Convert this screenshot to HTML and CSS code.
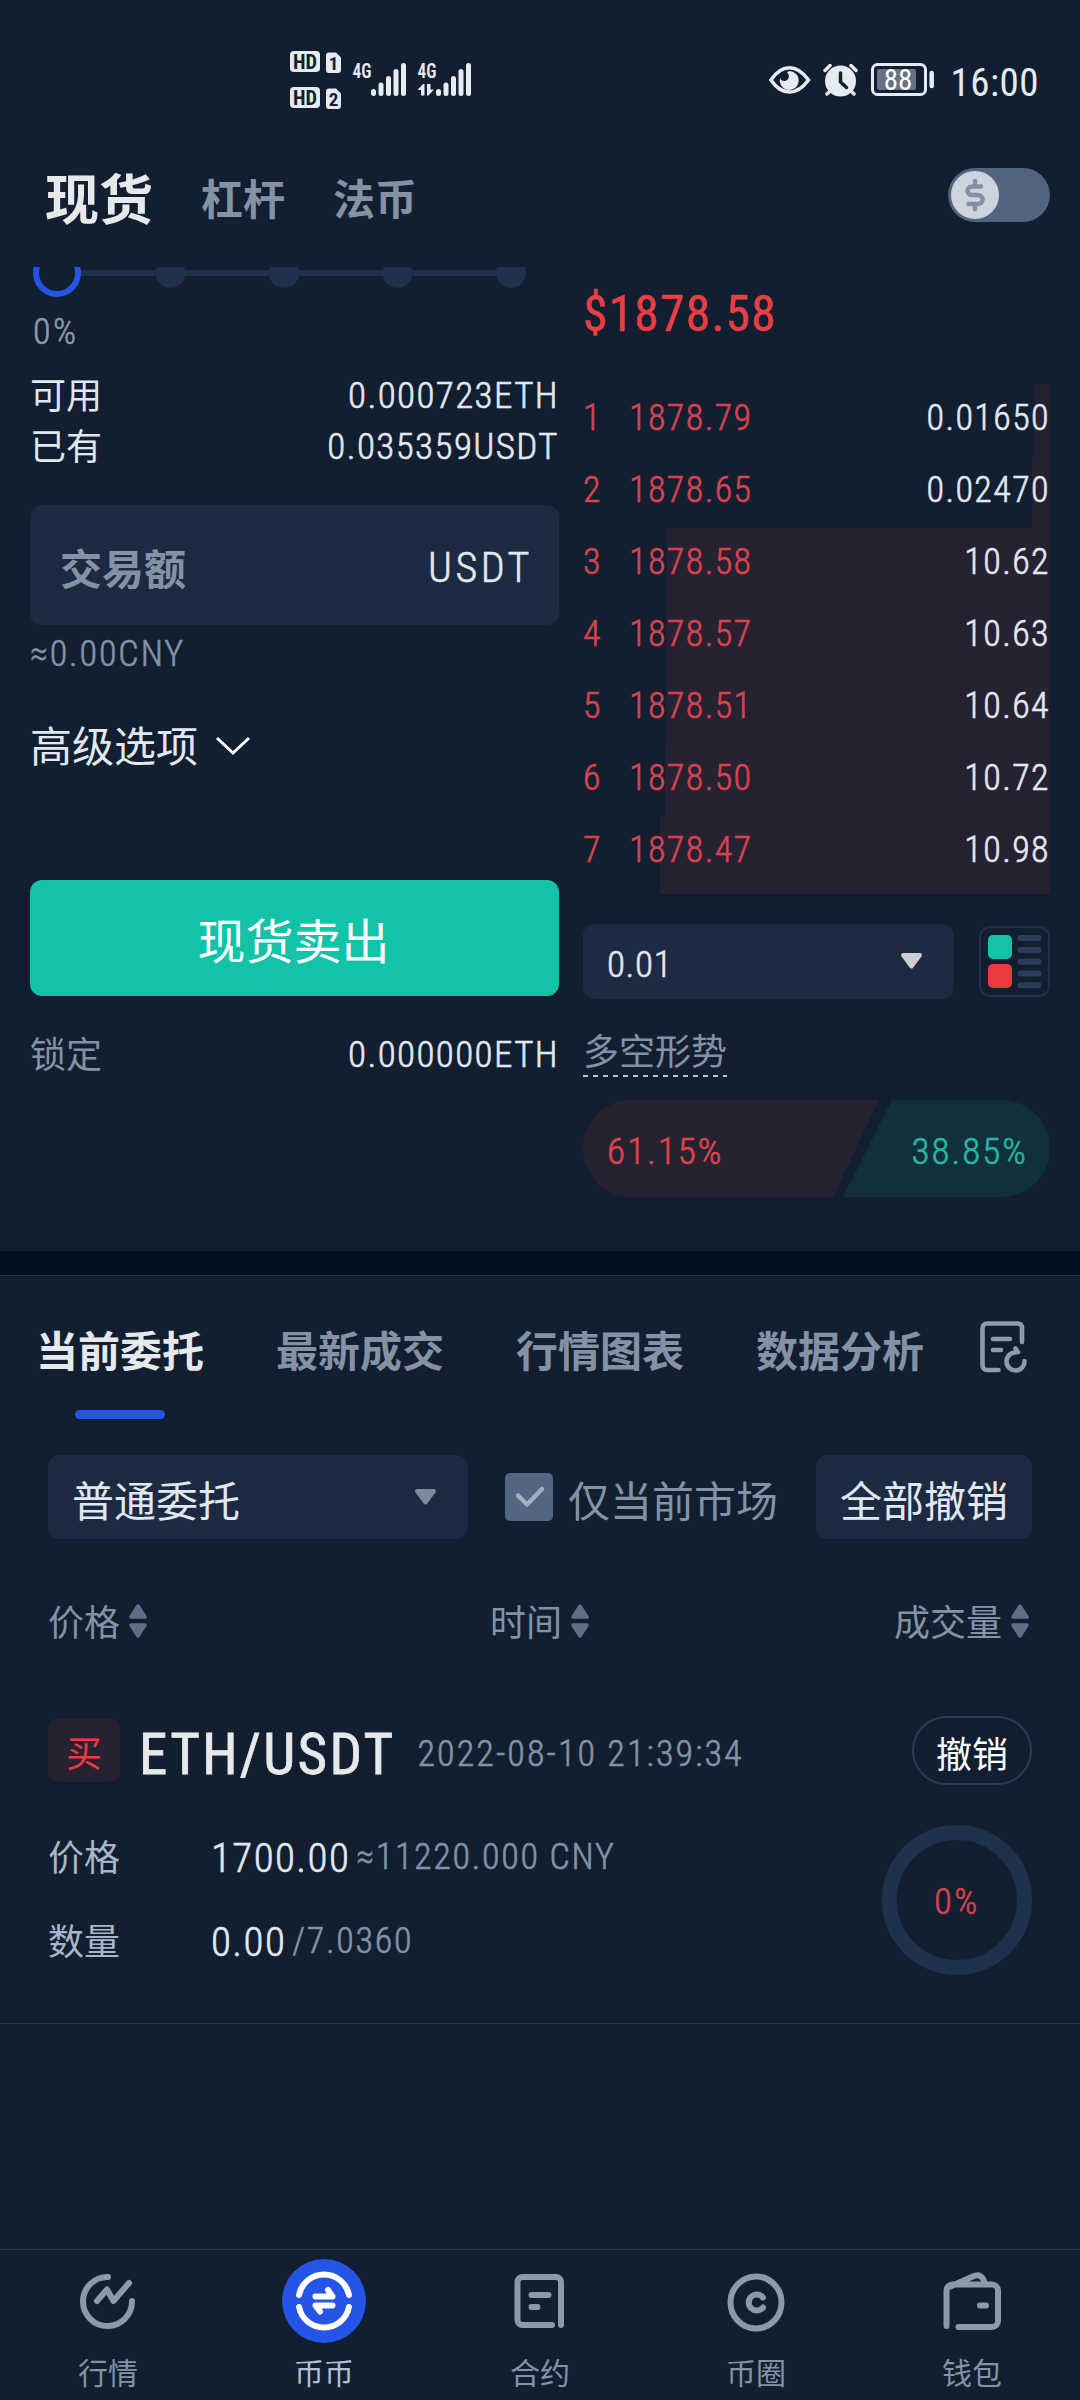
FILE: index.html
```
<!DOCTYPE html>
<html lang="zh-CN">
<head>
<meta charset="utf-8">
<title>现货交易</title>
<link rel="stylesheet" href="styles.css">
</head>
<body>
<div class="screen">
  <header class="status">
    <svg class="status-left" width="184" height="62" viewBox="288 49 184 62" fill="#e6ebf2">
      <rect x="290" y="51" width="30" height="21" rx="4"/>
      <text class="hd" x="305" y="69" textLength="24" lengthAdjust="spacingAndGlyphs">HD</text>
      <path d="M329 52.500h7l5 5V70a3 3 0 0 1-3 3h-9a3 3 0 0 1-3-3V55.500a3 3 0 0 1 3-3z"/>
      <text class="hd sim" x="333.500" y="69.500">1</text>
      <rect x="290" y="87" width="30" height="21" rx="4"/>
      <text class="hd" x="305" y="105" textLength="24" lengthAdjust="spacingAndGlyphs">HD</text>
      <path d="M329 88.500h7l5 5V106a3 3 0 0 1-3 3h-9a3 3 0 0 1-3-3V91.500a3 3 0 0 1 3-3z"/>
      <text class="hd sim" x="333.500" y="105.500">2</text>
      <text class="net" x="352.500" y="78" textLength="19" lengthAdjust="spacingAndGlyphs">4G</text>
      <g id="bars" stroke="#e6ebf2" stroke-width="5" stroke-linecap="round">
        <path d="M373.500 91.500v2M381 85v8.500M388.500 78.500v15M396 71.500v22M403.500 65.500v28"/>
      </g>
      <text class="net" x="417.500" y="78" textLength="19" lengthAdjust="spacingAndGlyphs">4G</text>
      <use href="#bars" x="65"/>
      <path d="M417.500 90l5.500-6h1.500v11.500H421V90zM427 84h3.500v5.500h3.500l-5.500 6H427z"/>
    </svg>
    <div class="status-right">
      <svg width="42" height="34" viewBox="771 63 42 34">
        <path d="M773 80c5-7.500 11-12.200 18.500-12.200S805 72.500 810.500 80c-5.500 7.500-11.500 12-19 12S778 87.500 773 80z" fill="none" stroke="#e6ebf2" stroke-width="3.600"/>
        <path d="M791 71a9.500 9.500 0 1 1-9 7a4.500 4.500 0 0 0 8.500 0a5 5 0 0 0-1.500-5.500z" fill="#e6ebf2"/>
      </svg>
      <svg width="36" height="34" viewBox="824 63 36 34">
        <circle cx="841.500" cy="81" r="15.500" fill="#e6ebf2"/>
        <path d="M826 70.500l5-5M857 70.500l-5-5M831 91l-3 3M852 91l3 3" stroke="#e6ebf2" stroke-width="3.500" stroke-linecap="round"/>
        <path d="M841.500 73v9l6 5.500" fill="none" stroke="#121f30" stroke-width="3.500" stroke-linecap="round" stroke-linejoin="round"/>
      </svg>
      <svg width="64" height="34" viewBox="872 63 64 34">
        <rect x="873.500" y="64.500" width="53" height="30" rx="5" fill="none" stroke="#e6ebf2" stroke-width="3"/>
        <rect x="878" y="69" width="39" height="21" rx="2" fill="#677283"/>
        <path d="M932.700 73v13" stroke="#e6ebf2" stroke-width="4.500" stroke-linecap="round"/>
        <text class="battery" x="899" y="89.500">88</text>
      </svg>
      <time class="clock">16:00</time>
    </div>
  </header>

  <nav class="markets">
    <a class="market active">现货</a>
    <a class="market">杠杆</a>
    <a class="market">法币</a>
    <span class="toggle"><svg width="48" height="48" viewBox="0 0 48 48"><circle cx="24" cy="24" r="24" fill="#cdd4de"/><path d="M30 15.500H21.500c-3 0-5 1.600-5 4.300s2 4.200 5 4.200h5c3 0 5 1.700 5 4.500s-2 4.500-5 4.500H17.500M24 10v5M24 33.500v5" fill="none" stroke="#8390a3" stroke-width="4.500" stroke-linecap="round"/></svg></span>
  </nav>

  <main class="trade">
    <section class="form">
      <svg class="slider" width="529" height="30" viewBox="30 267 529 30">
        <path d="M80 273h430" stroke="#20314c" stroke-width="6"/>
        <g fill="#20314c"><circle cx="170.500" cy="273" r="15"/><circle cx="284" cy="273" r="15"/><circle cx="397.500" cy="273" r="15"/><circle cx="511" cy="273" r="15"/></g>
        <circle cx="57" cy="273" r="21" fill="#121f30" stroke="#2455e6" stroke-width="6"/>
      </svg>
      <div class="percent num">0%</div>
      <div class="balances">
        <div class="balance"><span>可用</span><span class="num">0.000723ETH</span></div>
        <div class="balance"><span>已有</span><span class="num">0.035359USDT</span></div>
      </div>
      <div class="amount"><span class="placeholder">交易额</span><span class="unit num">USDT</span></div>
      <div class="approx num">≈0.00CNY</div>
      <div class="advanced"><span>高级选项</span>
        <svg width="36" height="22" viewBox="0 0 36 22"><path d="M2 3l16 15L34 3" fill="none" stroke="#fff" stroke-width="3"/></svg>
      </div>
      <button class="sell">现货卖出</button>
      <div class="balance locked"><span class="muted">锁定</span><span class="num">0.000000ETH</span></div>
    </section>

    <section class="book">
      <div class="last">$1878.58</div>
      <div class="asks num">
        <div class="ask" style="--depth:15px"><i>1</i><b>1878.79</b><span>0.01650</span></div>
        <div class="ask" style="--depth:18px"><i>2</i><b>1878.65</b><span>0.02470</span></div>
        <div class="ask" style="--depth:383px"><i>3</i><b>1878.58</b><span>10.62</span></div>
        <div class="ask" style="--depth:384px"><i>4</i><b>1878.57</b><span>10.63</span></div>
        <div class="ask" style="--depth:384px"><i>5</i><b>1878.51</b><span>10.64</span></div>
        <div class="ask" style="--depth:385px"><i>6</i><b>1878.50</b><span>10.72</span></div>
        <div class="ask" style="--depth:390px"><i>7</i><b>1878.47</b><span>10.98</span></div>
      </div>
      <div class="precision">
        <div class="select step num"><span>0.01</span>
          <svg width="23" height="18" viewBox="0 0 23 18"><path class="caret light" d="M3 3h17l-8.500 11.500z"/></svg>
        </div>
        <svg width="71" height="71" viewBox="0 0 71 71">
          <rect x="1" y="1" width="69" height="69" rx="10" fill="none" stroke="#22324a" stroke-width="2"/>
          <rect x="9" y="9" width="24" height="24" rx="5" fill="#12c3a8"/>
          <rect x="9" y="38" width="24" height="24" rx="5" fill="#eb3a40"/>
          <path d="M41.500 12h18M41.500 24h18M41.500 35.700h18M41.500 47.500h18M41.500 59.300h18" stroke="#2b3d5a" stroke-width="6" stroke-linecap="round"/>
        </svg>
      </div>
      <div class="trend">多空形势</div>
      <div class="ratio num">
        <svg class="ratio-bg" width="467" height="97" viewBox="0 0 467 97"><path d="M48.500 0H296L250 97H48.500a48.500 48.500 0 0 1 0-97z" fill="#272231"/><path d="M309 0H418.500a48.500 48.500 0 0 1 0 97H260z" fill="#12303c"/></svg>
        <span class="short">61.15%</span><span class="long">38.85%</span>
      </div>
    </section>
  </main>

  <section class="orders">
    <div class="tabs">
      <a class="tab active">当前委托</a>
      <a class="tab">最新成交</a>
      <a class="tab">行情图表</a>
      <a class="tab">数据分析</a>
      <svg class="history" width="48" height="52" viewBox="0 0 48 52" fill="none" stroke="#8e9bab" stroke-width="4.600" stroke-linecap="round" stroke-linejoin="round">
        <path d="M18.500 49H7a4.500 4.500 0 0 1-4.500-4.500V7A4.500 4.500 0 0 1 7 2.500h31A4 4 0 0 1 42 7v14M13 18h17M13 29h8"/>
        <path d="M44.500 40a9 9 0 1 1-10-8.500l3.500-.5l-2.500-3.500"/>
      </svg>
    </div>
    <div class="filters">
      <div class="select kind"><span>普通委托</span>
        <svg width="23" height="18" viewBox="0 0 23 18"><path class="caret" d="M3 3h17l-8.500 11.500z"/></svg>
      </div>
      <span class="check"><svg width="48" height="48" viewBox="0 0 48 48"><path d="M13 22.500l9 9L37 16" fill="none" stroke="#a4afbf" stroke-width="4.500" stroke-linecap="round" stroke-linejoin="round"/></svg></span>
      <span class="only">仅当前市场</span>
      <button class="cancel-all">全部撤销</button>
    </div>
    <div class="columns">
      <span>价格<svg width="18" height="34" viewBox="0 0 18 34"><path class="sort" d="M2 13L9 2l7 11zM2 21h14L9 32z"/></svg></span>
      <span>时间<svg width="18" height="34" viewBox="0 0 18 34"><path class="sort" d="M2 13L9 2l7 11zM2 21h14L9 32z"/></svg></span>
      <span>成交量<svg width="18" height="34" viewBox="0 0 18 34"><path class="sort" d="M2 13L9 2l7 11zM2 21h14L9 32z"/></svg></span>
    </div>
    <article class="order">
      <div class="order-head">
        <span class="side">买</span>
        <span class="pair">ETH/USDT</span>
        <time class="date num">2022-08-10 21:39:34</time>
        <button class="cancel">撤销</button>
      </div>
      <div class="order-body">
        <dl>
          <div class="field"><dt>价格</dt><dd class="num">1700.00</dd><dd class="num sub">≈11220.000 CNY</dd></div>
          <div class="field"><dt>数量</dt><dd class="num">0.00</dd><dd class="num sub">/7.0360</dd></div>
        </dl>
        <div class="ring num">0%</div>
      </div>
    </article>
  </section>

  <footer class="tabbar">
    <a class="item"><svg width="84" height="84" viewBox="0 0 84 84"><path d="M42 18a24.500 24.500 0 1 0 24 24M31 42l10-11.500 6.500 11.500L63 24"/></svg>行情</a>
    <a class="item current"><svg width="84" height="84" viewBox="0 0 84 84"><circle cx="42" cy="42" r="42"/><path d="M17 36a25.500 25.500 0 0 1 50 0M17 48a25.500 25.500 0 0 0 50 0"/><path d="M33.500 37.500h17L46 31M50.500 46.500h-17L38 52.500"/></svg>币币</a>
    <a class="item"><svg width="84" height="84" viewBox="0 0 84 84"><path d="M54 66H24.500a5 5 0 0 1-5-5V23a5 5 0 0 1 5-5H58a5 5 0 0 1 5 5v43M33.500 36h17M33.500 48h6"/></svg>合约</a>
    <a class="item"><svg width="84" height="84" viewBox="0 0 84 84"><ellipse cx="42" cy="43.500" rx="25.500" ry="26"/><path d="M49 38.500a8 8 0 1 0 0 10"/></svg>币圈</a>
    <a class="item"><svg width="84" height="84" viewBox="0 0 84 84"><path d="M16.500 67V31.500a6 6 0 0 1 6-6H62a6 6 0 0 1 6 6V62a6 6 0 0 1-6 6H28.500M18 28.500L44 17c5-2 9 .5 10.500 6.500M50 46.500h6"/></svg>钱包</a>
  </footer>
</div>
</body>
</html>
```
FILE: styles.css
```
* { box-sizing: border-box; }

body {
  margin: 0;
  background: #121f30;
  color: #e2e8f1;
  font-family: "Roboto Condensed", Roboto, "Noto Sans CJK SC", sans-serif;
  font-size: 36px;
}

button {
  padding: 0;
  border: 0;
  color: inherit;
  font: inherit;
}

svg { display: block; flex: none; }

.screen {
  display: flex;
  flex-direction: column;
  width: 1080px;
  height: 2400px;
  overflow: hidden;
}

/* Numerals: light face, slightly thickened */
.num { font-weight: 300; letter-spacing: 1.400px; -webkit-text-stroke: 0.600px currentColor; }
.muted { color: #8592a6; }

/* Status bar */
.status {
  display: flex;
  justify-content: space-between;
  height: 132px;
  padding: 49px 41px 0 288px;
}
.status text { font-family: "Roboto Condensed", Roboto, sans-serif; }
.hd { fill: #121f30; font-size: 21px; font-weight: 700; text-anchor: middle; }
.hd.sim { font-size: 19px; }
.net { font-size: 21px; font-weight: 600; }
.battery { fill: #fff; font-size: 29px; text-anchor: middle; }
.status-right { display: flex; gap: 12px; padding-top: 14px; }
.clock {
  margin-left: 3px;
  color: #e6ebf2;
  font-size: 39px;
  letter-spacing: 0.500px;
  line-height: 40px;
}

/* Market switcher */
.markets {
  display: flex;
  align-items: center;
  gap: 48px;
  height: 135px;
  padding: 0 30px 0 45px;
}
.market { color: #8592a6; font-size: 42px; font-weight: 700; line-height: 60px; padding-top: 3px; }
.market.active { padding-top: 4px; color: #e6e8ea; font-size: 54px; }
.toggle {
  display: flex;
  align-items: center;
  width: 102px;
  height: 54px;
  margin: 0 0 9px auto;
  padding-left: 3px;
  border-radius: 27px;
  background: #52647f;
}

/* Trade area */
.trade {
  display: flex;
  gap: 24px;
  height: 984px;
  padding: 0 30px;
}
.form { width: 529px; }
.percent { margin: 17px 0 0 3px; color: #8f99a8; letter-spacing: 2.500px; line-height: 36px; }
.balances { margin-top: 20px; }
.balance {
  display: flex;
  justify-content: space-between;
  line-height: 51px;
}
.balance span:first-child { padding-top: 2px; margin-bottom: -2px; }
.balance .num { font-size: 37px; }
.amount {
  display: flex;
  align-items: center;
  justify-content: space-between;
  height: 120px;
  margin-top: 33px;
  padding: 2px 28px 0 30px;
  border-radius: 12px;
  background: #1d2b42;
  font-size: 42px;
}
.placeholder { color: #8592a6; font-weight: 700; }
.unit { padding-top: 2px; letter-spacing: 3.500px; margin-right: -2px; }
.approx { margin-top: 11px; color: #8592a6; letter-spacing: 1.900px; line-height: 36px; }
.advanced {
  display: flex;
  align-items: center;
  gap: 17px;
  margin-top: 52px;
  font-size: 42px;
  line-height: 48px;
}
.advanced svg { margin-bottom: 5px; }
.sell {
  display: block;
  width: 529px;
  height: 116px;
  margin-top: 108px;
  padding-right: 2px;
  border-radius: 12px;
  background: #12c3a8;
  color: #fff;
  font-size: 48px;
  line-height: 126px;
}
.locked { margin-top: 33px; }

.book { width: 467px; }
.last {
  margin-top: 17px;
  color: #eb3d44;
  font-size: 50px;
  font-weight: 400;
  -webkit-text-stroke: 0.500px currentColor;
  letter-spacing: 1px;
  line-height: 60px;
}
.asks { margin-top: 40px; }
.ask {
  display: flex;
  height: 72px;
  background: linear-gradient(#272231, #272231) right / var(--depth) 100% no-repeat;
  line-height: 68px;
}
.ask:last-child { height: 78px; }
.ask i { width: 46px; color: #d9434f; font-style: normal; }
.ask b { color: #d9434f; font-weight: inherit; }
.ask span { margin-left: auto; }
.precision { display: flex; align-items: center; justify-content: space-between; margin-top: 30px; }
.select {
  display: flex;
  align-items: center;
  justify-content: space-between;
  border-radius: 12px;
  background: #1d2b42;
}
.step { width: 371px; height: 75px; padding: 5px 31px 0 24px; font-size: 37px; letter-spacing: 0.600px; }
.step svg { margin-bottom: 6px; }
.caret { fill: #7d8a9f; stroke: #7d8a9f; stroke-width: 4px; stroke-linejoin: round; }
.caret.light { fill: #ccced2; stroke: #ccced2; }
.trend {
  width: 144px;
  height: 50px;
  margin-top: 28px;
  background: repeating-linear-gradient(90deg, #b9c3d1 0 5px, transparent 5px 10px) bottom / 100% 2px no-repeat;
  color: #8592a6;
  line-height: 52px;
}
.ratio {
  position: relative;
  display: flex;
  justify-content: space-between;
  height: 97px;
  margin-top: 23px;
  padding: 0 22px 0 24px;
  font-size: 37px;
  letter-spacing: 2px;
  line-height: 103px;
}
.ratio-bg { position: absolute; inset: 0; }
.ratio span { position: relative; }
.short { color: #e0454f; }
.long { color: #27b79f; }

/* Orders */
.orders {
  height: 998px;
  border-top: 24px solid #020f20;
  box-shadow: inset 0 1px #263447;
}
.tabs { display: flex; gap: 72px; height: 144px; padding: 52px 0 0 36px; }
.tab {
  width: 168px;
  color: #8592a6;
  font-size: 42px;
  font-weight: 700;
  line-height: 52px;
  white-space: nowrap;
}
.tab.active { color: #e6e8ea; }
.tab.active::after {
  content: "";
  display: block;
  width: 90px;
  height: 9px;
  margin: 31px auto 0;
  border-radius: 5px;
  background: #2455e6;
}
.history { margin: -6px 0 0 -16px; }
.filters {
  display: flex;
  align-items: center;
  height: 84px;
  margin-top: 36px;
  padding: 0 48px;
  font-size: 42px;
}
.kind { width: 420px; height: 84px; padding: 3px 31px 0 24px; }
.kind svg { margin-bottom: 4px; }
.check { width: 48px; height: 48px; margin-left: 37px; border-radius: 5px; background: #536580; }
.only { margin-left: 15px; padding-top: 3px; color: #8592a6; }
.cancel-all {
  width: 216px;
  height: 84px;
  margin-left: auto;
  padding-top: 3px;
  border-radius: 12px;
  background: #1d2b42;
}
.columns {
  display: grid;
  grid-template-columns: 442px 1fr auto;
  margin-top: 60px;
  padding: 0 51px 0 48px;
  color: #8592a6;
  line-height: 50px;
}
.columns span { display: flex; align-items: center; gap: 9px; }
.columns svg { margin-bottom: 7px; }
.sort { fill: #5f6f87; stroke: #5f6f87; stroke-width: 3.500px; stroke-linejoin: round; }

.order { height: 356px; margin-top: 19px; padding: 48px 48px 0; border-bottom: 1px solid #263447; }
.order-head { display: flex; align-items: center; height: 69px; }
.side {
  width: 72px;
  height: 63px;
  border-radius: 10px;
  background: #272231;
  color: #eb3a42;
  line-height: 72px;
  text-align: center;
}
.pair { margin-left: 19px; padding-top: 7px; color: #e6e8ea; font-size: 57px; font-weight: 400; -webkit-text-stroke: 0.800px currentColor; letter-spacing: 2.300px; }
.date { margin-left: 22px; padding-top: 6px; color: #8592a6; letter-spacing: 2.100px; }
.cancel {
  width: 120px;
  height: 69px;
  margin-left: auto;
  padding-top: 3px;
  border: 2px solid #2b3d58;
  border-radius: 35px;
  background: none;
  color: #fff;
}
.order-body { display: flex; justify-content: space-between; padding-top: 31px; }
dl { margin: 0; }
dd { margin: 0; font-size: 41px; }
.field { display: flex; height: 84px; line-height: 85px; }
dt { width: 163px; color: #a9b5c9; line-height: 87px; }
.sub { margin-left: 6px; color: #8592a6; font-size: 36px; letter-spacing: 1.700px; line-height: 83px; }
.ring {
  width: 150px;
  height: 150px;
  margin-top: 9px;
  border: 15px solid #20314c;
  border-radius: 50%;
  color: #d9434f;
  letter-spacing: 2.500px;
  line-height: 125px;
  text-align: center;
}

/* Bottom navigation */
.tabbar {
  display: flex;
  height: 151px;
  border-top: 1px solid #2a3747;
}
.item {
  display: flex;
  flex: 1;
  flex-direction: column;
  align-items: center;
  padding-top: 9px;
  color: #8592a6;
  font-size: 30px;
  line-height: 61px;
}
.item svg { fill: none; stroke: #8c99ab; stroke-width: 6px; stroke-linecap: round; stroke-linejoin: round; }
.item.current { color: #b3bfd1; }
.current svg { stroke: #fff; }
.current circle { fill: #2455e6; stroke: none; }
```
